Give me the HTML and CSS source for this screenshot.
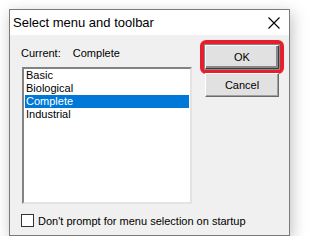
FILE: index.html
```html
<!DOCTYPE html>
<html>
<head>
    <title>Select menu and toolbar</title>
    <link rel="stylesheet" href="styles.css">
</head>
<body>
    <div class="dialog">
        <div class="titlebar">
            <span class="title">Select menu and toolbar</span>
            <svg class="close" width="12" height="12" viewBox="0 0 12 12">
                <path d="M0.5 0.5 L11.5 11.5 M11.5 0.5 L0.5 11.5" stroke="#000" stroke-width="1.1" fill="none"/>
            </svg>
        </div>
        <div class="content">
            <div class="left">
                <div class="current">
                    <span class="current-label">Current:</span>
                    <span>Complete</span>
                </div>
                <ul class="listbox">
                    <li>Basic</li>
                    <li>Biological</li>
                    <li class="selected">Complete</li>
                    <li>Industrial</li>
                </ul>
            </div>
            <div class="buttons">
                <button class="btn default">OK</button>
                <button class="btn">Cancel</button>
            </div>
        </div>
        <label class="check">
            <span class="box"></span>
            Don't prompt for menu selection on startup
        </label>
    </div>
</body>
</html>
```

FILE: styles.css
```css
body {
    margin: 0;
    background-color: #fff;
    font-family: "Liberation Sans", Arial, sans-serif;
    font-size: 11px;
    color: #000;
}

.dialog {
    box-sizing: border-box;
    width: 281px;
    height: 227px;
    margin: 9px 0 0 9px;
    border: 1px solid #7a7a7a;
    background-color: #f0f0f0;
    box-shadow: 2px 4px 14px rgba(0, 0, 0, 0.25);
}

.titlebar {
    height: 25px;
    background-color: #fff;
    display: flex;
    align-items: center;
    justify-content: space-between;
    padding: 0 9px 0 3px;
}

.title {
    font-size: 13px;
}

.content {
    display: flex;
    padding: 10px 0 0 11px;
}

.left {
    width: 171px;
}

.current {
    margin-top: 1px;
    height: 14px;
    line-height: 14px;
}

.current-label {
    margin-right: 9px;
}

.listbox {
    list-style: none;
    box-sizing: border-box;
    width: 170px;
    height: 137px;
    margin: 7px 0 0 1px;
    padding: 0 1px;
    background-color: #fff;
    border: 2px solid;
    border-color: #828282 #e3e3e3 #e3e3e3 #828282;
}

.listbox li {
    height: 13px;
    line-height: 13px;
    padding-left: 1px;
}

.listbox li.selected {
    background-color: #0078d7;
    color: #fff;
}

.buttons {
    display: flex;
    flex-direction: column;
    gap: 4px;
    margin-left: 13px;
}

.btn {
    box-sizing: border-box;
    width: 74px;
    height: 24px;
    padding: 0;
    font-family: inherit;
    font-size: 11px;
    color: #000;
    background-color: #e1e1e1;
    border: 1px solid;
    border-color: #fff #696969 #696969 #fff;
    box-shadow: inset -1px -1px 0 #a0a0a0;
}

.btn.default {
    border-color: #f6f6f6 #3c3c3c #3c3c3c #f6f6f6;
    box-shadow: inset -2px -2px 0 #888, 0 0 0 1px #888;
    outline: 4px solid #e5202e;
    outline-offset: 1px;
    border-radius: 1px;
}

.check {
    display: flex;
    align-items: center;
    margin: 10px 0 0 11px;
}

.box {
    box-sizing: border-box;
    width: 13px;
    height: 13px;
    margin-right: 4px;
    background-color: #fff;
    border: 1px solid #333;
}
```
